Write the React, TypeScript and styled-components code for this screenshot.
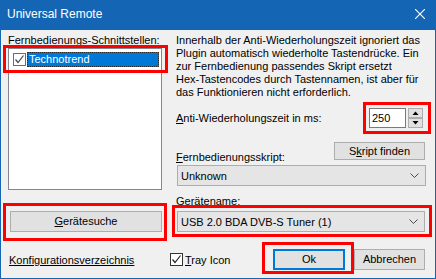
import React from 'react';
import styled, { createGlobalStyle } from 'styled-components';

const Global = createGlobalStyle`
  html, body { margin: 0; padding: 0; background: #fff; }
  body {
    font-family: "Liberation Sans", Arial, sans-serif;
    font-size: 11px;
    color: #000;
  }
  * { box-sizing: border-box; }
`;

const BLUE = '#1565b5';

const Window = styled.div`
  position: relative;
  width: 436px;
  height: 279px;
  background: #f0f0f0;
  border: 1px solid ${BLUE};
  border-top: none;
  display: flex;
  flex-direction: column;
  overflow: hidden;
`;

const TitleBar = styled.div`
  height: 30px;
  margin: 0 -1px;
  background: ${BLUE};
  color: #fff;
  display: flex;
  align-items: center;
  justify-content: space-between;
  padding: 0 11px 3px 7px;
  font-size: 12px;
  line-height: 14px;
`;

const Body = styled.div`
  display: grid;
  grid-template-columns: 154px 250px;
  column-gap: 14px;
  padding: 4px 0 0 7px;
`;

const Column = styled.div`
  display: flex;
  flex-direction: column;
`;

const Label = styled.div<{ $mt?: number }>`
  line-height: 13px;
  height: 13px;
  white-space: nowrap;
  margin-top: ${(p) => p.$mt ?? 0}px;
`;

const ListBox = styled.div`
  margin-top: 1px;
  height: 142px;
  background: #fff;
  border: 1px solid #828790;
  padding: 3px 2px 0 4px;
`;

const ListItem = styled.div`
  display: flex;
  align-items: center;
  height: 15px;
`;

const Check = styled.span<{ $dark?: boolean }>`
  width: 13px;
  height: 13px;
  flex: none;
  background: #fff;
  border: 1px solid ${(p) => (p.$dark ? '#333' : '#6d6d6d')};
  display: inline-flex;
  align-items: center;
  justify-content: center;
`;

const Selected = styled.span`
  margin-left: 1px;
  flex: 1;
  height: 15px;
  background: #0078d7;
  color: #fff;
  border: 1px dotted #2a2a2a;
  padding-left: 1px;
  line-height: 13px;
`;

const Button = styled.button<{ $w: number; $h?: number; $default?: boolean; $ml?: number; $mt?: number }>`
  width: ${(p) => p.$w}px;
  height: ${(p) => p.$h ?? 21}px;
  margin-left: ${(p) => p.$ml ?? 0}px;
  margin-top: ${(p) => p.$mt ?? 0}px;
  padding: 0;
  background: #e1e1e1;
  border: ${(p) => (p.$default ? '2px solid #0078d7' : '1px solid #adadad')};
  font-family: "Liberation Sans", Arial, sans-serif;
  font-size: 11px;
  color: #000;
  line-height: 13px;
  flex: none;
`;

const Paragraph = styled.div`
  line-height: 13px;
  white-space: nowrap;
`;

const SpinRow = styled.div`
  margin-top: 9px;
  height: 20px;
  display: flex;
  align-items: center;
  justify-content: space-between;
  padding-right: 3px;
`;

const SpinGroup = styled.div`
  display: flex;
  gap: 2px;
  height: 20px;
`;

const SpinEdit = styled.div`
  width: 37px;
  height: 20px;
  background: #fff;
  border: 1px solid #7a7a7a;
  padding-left: 2px;
  line-height: 18px;
`;

const SpinButtons = styled.div`
  display: flex;
  flex-direction: column;
  width: 15px;
`;

const SpinBtn = styled.div`
  height: 10px;
  background: #e1e1e1;
  border: 1px solid #adadad;
  display: flex;
  align-items: center;
  justify-content: center;
`;

const ScriptRow = styled.div`
  margin-top: 14px;
  height: 22px;
  display: flex;
  justify-content: space-between;
  padding-right: 1px;
`;

const BottomLabel = styled(Label)`
  align-self: flex-end;
`;

const Combo = styled.div<{ $w: number; $mt: number }>`
  margin-top: ${(p) => p.$mt}px;
  margin-left: 1px;
  width: ${(p) => p.$w}px;
  height: 21px;
  background: #e5e5e5;
  border: 1px solid #adadad;
  display: flex;
  align-items: center;
  justify-content: space-between;
  padding: 0 6px 0 3px;
  white-space: nowrap;
`;

const BottomRow = styled.div`
  margin-top: 17px;
  height: 21px;
  display: flex;
  align-items: center;
  padding-left: 8px;
`;

const Slot = styled.div<{ $w: number }>`
  width: ${(p) => p.$w}px;
  flex: none;
  display: flex;
  align-items: center;
`;

const Link = styled.span`
  text-decoration: underline;
  white-space: nowrap;
`;

const CheckLabel = styled.span`
  margin-left: 2px;
  white-space: nowrap;
`;

const Highlight = styled.div<{ $x: number; $y: number; $w: number; $h: number }>`
  position: absolute;
  left: ${(p) => p.$x}px;
  top: ${(p) => p.$y}px;
  width: ${(p) => p.$w}px;
  height: ${(p) => p.$h}px;
  border: 3px solid #ff0000;
  pointer-events: none;
`;

const CheckMark = ({ color }: { color: string }) => (
  <svg width="11" height="11" viewBox="0 0 11 11">
    <path d="M1.5 5.5 L4 8.5 L9.5 1.5" fill="none" stroke={color} strokeWidth="1.2" />
  </svg>
);

const Chevron = () => (
  <svg width="9" height="5" viewBox="0 0 9 5">
    <path d="M0.5 0.5 L4.5 4.5 L8.5 0.5" fill="none" stroke="#4a4a4a" strokeWidth="1" />
  </svg>
);

const CloseIcon = () => (
  <svg width="10" height="10" viewBox="0 0 10 10">
    <path d="M0 0 L10 10 M10 0 L0 10" stroke="#fff" strokeWidth="1.1" />
  </svg>
);

const Tri = ({ up }: { up?: boolean }) => (
  <svg width="7" height="4" viewBox="0 0 7 4">
    <path d={up ? 'M0.5 4 L3.5 0.5 L6.5 4 Z' : 'M0.5 0 L3.5 3.5 L6.5 0 Z'} fill="#000" />
  </svg>
);

export default function App() {
  return (
    <>
      <Global />
      <Window>
        <TitleBar>
          <span>Universal Remote</span>
          <CloseIcon />
        </TitleBar>
        <Body>
          <Column>
            <Label>Fernbedienungs-Schnittstellen:</Label>
            <ListBox>
              <ListItem>
                <Check>
                  <CheckMark color="#444" />
                </Check>
                <Selected>Technotrend</Selected>
              </ListItem>
            </ListBox>
            <Button $w={152} $ml={2} $mt={21}>
              <u>G</u>erätesuche
            </Button>
          </Column>
          <Column>
            <Paragraph>
              Innerhalb der Anti-Wiederholungszeit ignoriert das
              <br />
              Plugin automatisch wiederholte Tastendrücke. Ein
              <br />
              zur Fernbedienung passendes Skript ersetzt
              <br />
              Hex-Tastencodes durch Tastennamen, ist aber für
              <br />
              das Funktionieren nicht erforderlich.
            </Paragraph>
            <SpinRow>
              <Label>
                <u>A</u>nti-Wiederholungszeit in ms:
              </Label>
              <SpinGroup>
                <SpinEdit>250</SpinEdit>
                <SpinButtons>
                  <SpinBtn>
                    <Tri up />
                  </SpinBtn>
                  <SpinBtn>
                    <Tri />
                  </SpinBtn>
                </SpinButtons>
              </SpinGroup>
            </SpinRow>
            <ScriptRow>
              <BottomLabel>
                <u>F</u>ernbedienungsskript:
              </BottomLabel>
              <Button $w={91} $h={18}>
                S<u>k</u>ript finden
              </Button>
            </ScriptRow>
            <Combo $w={249} $mt={1}>
              <span>Unknown</span>
              <Chevron />
            </Combo>
            <Label $mt={9}>Gerätename:</Label>
            <Combo $w={248} $mt={3}>
              <span>USB 2.0 BDA DVB-S Tuner (1)</span>
              <Chevron />
            </Combo>
          </Column>
        </Body>
        <BottomRow>
          <Slot $w={161}>
            <Link>Konfigurationsverzeichnis</Link>
          </Slot>
          <Slot $w={103}>
            <Check $dark>
              <CheckMark color="#222" />
            </Check>
            <CheckLabel>
              <u>T</u>ray Icon
            </CheckLabel>
          </Slot>
          <Button $w={72} $default>
            Ok
          </Button>
          <Button $w={71} $ml={9}>
            Abbrechen
          </Button>
        </BottomRow>
        <Highlight $x={2} $y={45} $w={165} $h={28} />
        <Highlight $x={362} $y={102} $w={68} $h={32} />
        <Highlight $x={2} $y={203} $w={164} $h={38} />
        <Highlight $x={171} $y={205} $w={260} $h={32} />
        <Highlight $x={261} $y={242} $w={92} $h={32} />
      </Window>
    </>
  );
}
